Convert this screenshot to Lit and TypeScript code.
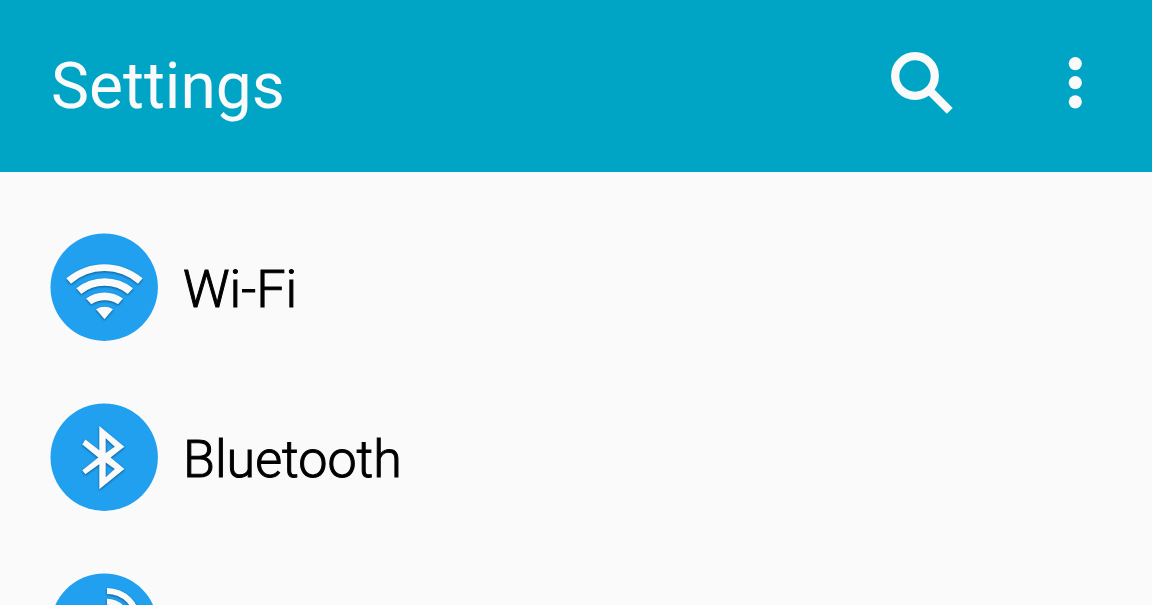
import { LitElement, html, svg, css } from "lit";
import { customElement } from "lit/decorators.js";

const wifi = svg`
  <path d="M16.3 45.3A59 59 0 0 1 92.7 45.3L88 50.8A50.5 50.5 0 0 0 21 50.8Z"/>
  <path d="M26.3 55.3A45 45 0 0 1 83 55.3L77.8 61A36.6 36.6 0 0 0 31.3 61Z"/>
  <path d="M36 65.6A31.5 31.5 0 0 1 73 65.6L68 71.3A24 24 0 0 0 41.3 71.3Z"/>
  <path d="M46 76.3A17 17 0 0 1 63 76.3L54.5 86.3Z"/>`;

const bluetooth = svg`
  <path fill-rule="evenodd" d="M49.3 23L74.4 43.7L60.6 54.5L74.4 66L49.3 86.3V61.3L35.3 71.3L32.3 67.2L48.3 54.4L32.3 41.6L35.4 36.4L49.3 47.3Z
    M55.7 35.3V50L64.8 43.7ZM55.7 59.6V74.3L64.8 66Z"/>`;

const signal = svg`
  <path d="M57 15A33.7 33.7 0 0 1 90.7 48.7H84.7A27.7 27.7 0 0 0 57 21Z"/>
  <path d="M57 25.7A23 23 0 0 1 80 48.7H74A17 17 0 0 0 57 31.7Z"/>`;

const items = [
  { label: "Wi-Fi", glyph: wifi },
  { label: "Bluetooth", glyph: bluetooth },
  { label: "", glyph: signal },
];

@customElement("app-root")
export class AppRoot extends LitElement {
  static styles = css`
    :host {
      display: block;
      height: 100vh;
      overflow: hidden;
      background: #fafafa;
      color: #000;
      font-family: Roboto, sans-serif;
    }
    .bar {
      display: flex;
      align-items: center;
      gap: 58px;
      box-sizing: border-box;
      height: 172px;
      padding: 0 29px 0 51px;
      background: #00a5c5;
      color: #fafafa;
    }
    .title {
      flex: 1;
      margin: 0;
      padding-top: 2px;
      font-size: 64px;
      line-height: 76px;
      font-weight: 400;
    }
    .action {
      display: block;
      width: 96px;
      height: 96px;
      padding: 0;
      border: 0;
      background: none;
      color: inherit;
    }
    .action svg,
    .icon {
      display: block;
    }
    .list {
      margin: 0;
      padding: 30px 0 0;
      list-style: none;
    }
    .row {
      display: flex;
      align-items: center;
      gap: 25px;
      height: 170px;
      padding: 0 50px;
      color: inherit;
      text-decoration: none;
      font-size: 52px;
      font-weight: 300;
      line-height: 60px;
    }
    .label {
      padding-top: 6px;
      -webkit-text-stroke: 1px currentColor;
    }
    .icon {
      flex: none;
    }
    .glyph {
      fill: #fafafa;
      filter: drop-shadow(0 1px 1px rgba(0, 40, 80, 0.6));
    }
  `;

  render() {
    return html`
      <header class="bar">
        <h1 class="title">Settings</h1>
        <button class="action" type="button" aria-label="Search">
          <svg width="96" height="96" viewBox="0 0 96 96" fill="none" stroke="currentColor" stroke-width="8.2">
            <circle cx="42" cy="38" r="19.8" />
            <path d="M56 52L76.8 72.8" />
          </svg>
        </button>
        <button class="action" type="button" aria-label="More options">
          <svg width="96" height="96" viewBox="0 0 96 96" fill="currentColor">
            <circle cx="48.3" cy="25.6" r="6.6" />
            <circle cx="48.3" cy="44.7" r="6.6" />
            <circle cx="48.3" cy="63.8" r="6.6" />
          </svg>
        </button>
      </header>
      <main>
        <ul class="list">
          ${items.map(
            (item) => html`
              <li>
                <a class="row" href="#">
                  <svg class="icon" width="108" height="108" viewBox="0 0 108 108" aria-hidden="true">
                    <circle cx="54.2" cy="54.2" r="53.7" fill="#20a0ef" />
                    <g class="glyph">${item.glyph}</g>
                  </svg>
                  <span class="label">${item.label}</span>
                </a>
              </li>
            `
          )}
        </ul>
      </main>
    `;
  }
}
